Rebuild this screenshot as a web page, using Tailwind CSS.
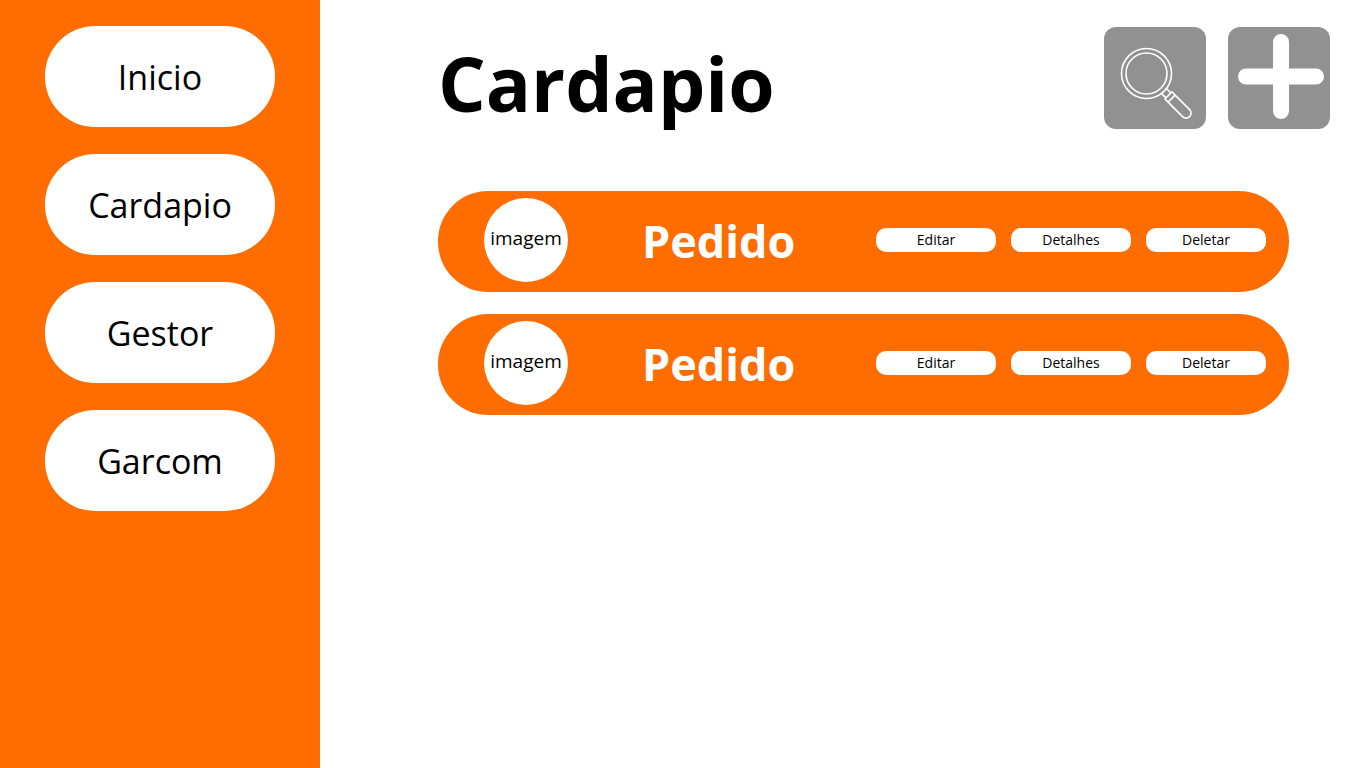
<!DOCTYPE html>
<html lang="pt-BR">
<head>
<meta charset="utf-8">
<meta name="viewport" content="width=device-width, initial-scale=1">
<title>Cardapio</title>
<script src="https://cdn.jsdelivr.net/npm/@tailwindcss/browser@4"></script>
</head>
<body class="flex min-h-screen bg-white font-['Open_Sans','Noto_Sans',sans-serif] text-black">
  <nav aria-label="Principal" class="flex w-80 shrink-0 flex-col gap-[27px] bg-[#ff6c00] px-[45px] pt-[26px]">
    <a href="#inicio" class="flex h-[101px] items-center justify-center rounded-[50px] bg-white text-[34px] leading-[48px]">Inicio</a>
    <a href="#cardapio" aria-current="page" class="flex h-[101px] items-center justify-center rounded-[50px] bg-white text-[34px] leading-[48px]">Cardapio</a>
    <a href="#gestor" class="flex h-[101px] items-center justify-center rounded-[50px] bg-white text-[34px] leading-[48px]">Gestor</a>
    <a href="#garcom" class="flex h-[101px] items-center justify-center rounded-[50px] bg-white text-[34px] leading-[48px]">Garcom</a>
  </nav>

  <main class="min-w-0 flex-1 pt-[27px] pl-[118px]">
    <header class="flex items-start justify-between pr-9">
      <h1 class="text-[75px] leading-[112px] font-bold">Cardapio</h1>
      <div class="flex gap-[22px]">
        <button type="button" aria-label="Pesquisar" class="size-[102px] rounded-xl bg-[#919191]">
          <svg viewBox="0 0 102 102" class="size-full" fill="none" stroke="#fff" stroke-width="1.6" stroke-linejoin="round" aria-hidden="true">
            <circle cx="42.500" cy="46.500" r="25"/>
            <circle cx="42.500" cy="46.500" r="20.500"/>
            <g transform="translate(42.5 46.5) rotate(45)">
              <path d="M25 -3.500H31M25 3.500H31"/>
              <path d="M31 -5H35.500V5H31Z"/>
              <path d="M35.500 -5H56A5 5 0 0 1 56 5H35.500"/>
            </g>
          </svg>
        </button>
        <button type="button" aria-label="Adicionar" class="size-[102px] rounded-xl bg-[#919191]">
          <svg viewBox="0 0 102 102" class="size-full" fill="none" stroke="#fff" stroke-width="16" stroke-linecap="round" aria-hidden="true">
            <path d="M53 15V84M18 49.500H88"/>
          </svg>
        </button>
      </div>
    </header>

    <ul class="mt-[52px] mr-[77px] flex flex-col gap-[22px]">
      <li class="flex h-[101px] items-center rounded-[50px] bg-[#ff6c00] pr-[23px] pb-[3px] pl-[46px]">
        <div class="flex size-[84px] shrink-0 items-center justify-center rounded-full bg-white pb-1 text-[19px] leading-6">imagem</div>
        <h2 class="ml-[74px] pt-0.5 text-[45px] leading-[60px] font-bold text-white">Pedido</h2>
        <div class="ml-auto flex gap-[15px] text-sm leading-6">
          <button type="button" class="h-6 w-[120px] rounded-[10px] bg-white">Editar</button>
          <button type="button" class="h-6 w-[120px] rounded-[10px] bg-white">Detalhes</button>
          <button type="button" class="h-6 w-[120px] rounded-[10px] bg-white">Deletar</button>
        </div>
      </li>
      <li class="flex h-[101px] items-center rounded-[50px] bg-[#ff6c00] pr-[23px] pb-[3px] pl-[46px]">
        <div class="flex size-[84px] shrink-0 items-center justify-center rounded-full bg-white pb-1 text-[19px] leading-6">imagem</div>
        <h2 class="ml-[74px] pt-0.5 text-[45px] leading-[60px] font-bold text-white">Pedido</h2>
        <div class="ml-auto flex gap-[15px] text-sm leading-6">
          <button type="button" class="h-6 w-[120px] rounded-[10px] bg-white">Editar</button>
          <button type="button" class="h-6 w-[120px] rounded-[10px] bg-white">Detalhes</button>
          <button type="button" class="h-6 w-[120px] rounded-[10px] bg-white">Deletar</button>
        </div>
      </li>
    </ul>
  </main>
</body>
</html>
